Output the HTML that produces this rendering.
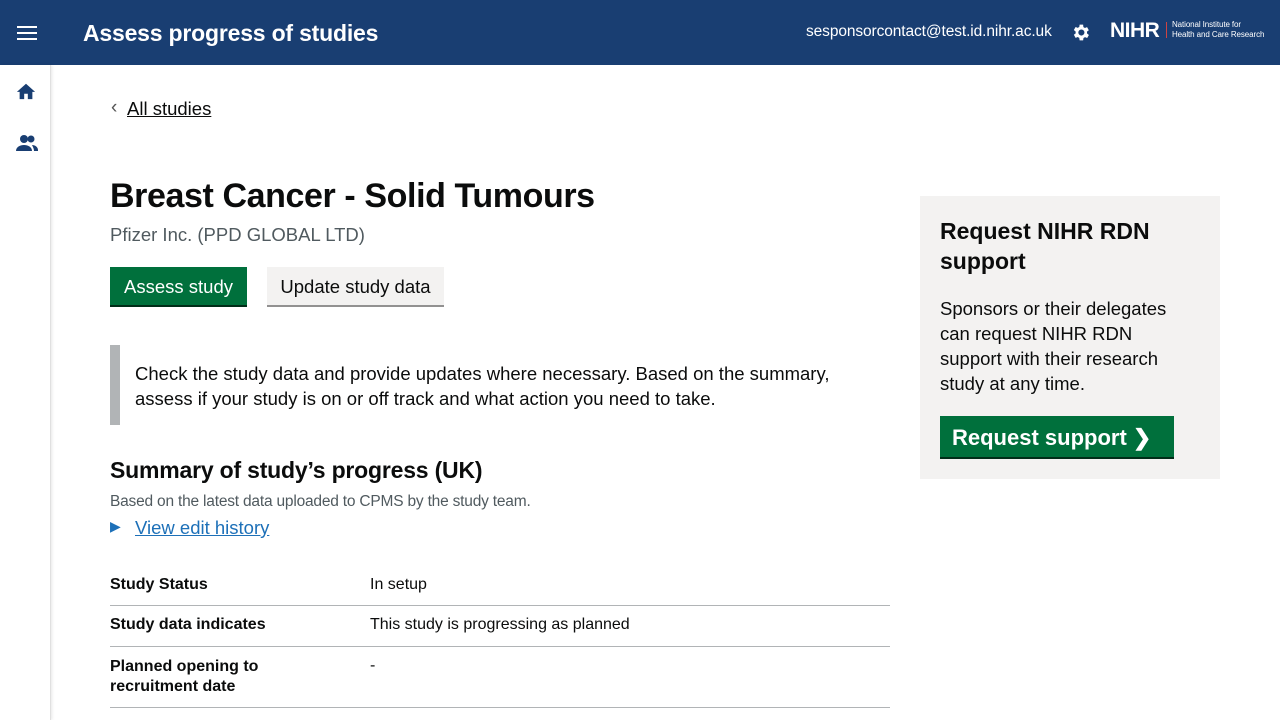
<!DOCTYPE html>
<html><head><style>
body{margin:0;width:1280px;height:720px;overflow:hidden;font-family:"Liberation Sans",sans-serif;background:#fff;color:#0b0c0c;position:relative}
.hdr{position:absolute;left:0;top:0;width:1280px;height:65px;background:#193e72}
.side{position:absolute;left:0;top:65px;width:50px;height:655px;background:#fff;border-right:1px solid #e0e0e0;box-shadow:1px 0 3px rgba(0,0,0,.1)}
.a{position:absolute;white-space:nowrap}
td{vertical-align:top;font-size:16px;padding:0}
</style></head><body>
<div class="hdr">
 <svg class="a" style="left:17px;top:26px" width="20" height="14"><rect y="0" width="20" height="2" fill="#fff"/><rect y="6" width="20" height="2" fill="#fff"/><rect y="12" width="20" height="2" fill="#fff"/></svg>
 <div class="a" style="left:83px;top:20px;color:#fff;font-size:23px;font-weight:bold;letter-spacing:-0.2px">Assess progress of studies</div>
 <div class="a" style="left:806px;top:23px;color:#fff;font-size:15.5px;letter-spacing:-0.1px">sesponsorcontact@test.id.nihr.ac.uk</div>
 <svg class="a" style="left:1070px;top:22px" width="21" height="21" viewBox="0 0 24 24"><path fill="#fff" d="M19.4 13a7.5 7.5 0 0 0 0-2l2.1-1.6-2-3.5-2.5 1a7 7 0 0 0-1.7-1L15 3h-4l-.4 2.7a7 7 0 0 0-1.7 1l-2.5-1-2 3.5L6.5 11a7.5 7.5 0 0 0 0 2l-2.1 1.6 2 3.5 2.5-1a7 7 0 0 0 1.7 1L11 21h4l.4-2.7a7 7 0 0 0 1.7-1l2.5 1 2-3.5zM13 15.5A3.5 3.5 0 1 1 13 8.5a3.5 3.5 0 0 1 0 7z"/></svg>
 <div class="a" style="left:1110px;top:19px;color:#fff;font-size:21px;font-weight:bold;letter-spacing:-0.5px">NIHR</div>
 <div class="a" style="left:1166px;top:22px;width:1px;height:16px;background:#c44"></div>
 <div class="a" style="left:1172px;top:20px;color:#fff;font-size:8px;line-height:10px;letter-spacing:-0.1px">National Institute for<br>Health and Care Research</div>
</div>
<div class="side">
 <svg class="a" style="left:15px;top:16px" width="22" height="20" viewBox="0 0 24 22"><path fill="#193e72" d="M10 20v-6h4v6h5v-8h3L12 3 2 12h3v8z"/></svg>
 <svg class="a" style="left:15px;top:68px" width="24" height="20" viewBox="0 0 24 20"><circle cx="9" cy="6" r="4" fill="#193e72"/><circle cx="16" cy="6" r="3.5" fill="#193e72"/><path fill="#193e72" d="M1 18c0-4 4-6 8-6s8 2 8 6zM17 12c3 0 6 2 6 5v1h-4c0-2-1-4-2-6z"/></svg>
</div>
<div class="a" style="left:111px;top:97px;font-size:19px;color:#555">&#8249;</div>
<div class="a" style="left:127px;top:98px;font-size:18.5px;text-decoration:underline">All studies</div>
<div class="a" style="left:110px;top:177px;font-size:34px;font-weight:bold;letter-spacing:-0.4px">Breast Cancer - Solid Tumours</div>
<div class="a" style="left:110px;top:224px;font-size:18.5px;color:#505a5f">Pfizer Inc. (PPD GLOBAL LTD)</div>
<div class="a" style="left:110px;top:267px;width:137px;height:38px;background:#00703c;border-bottom:2px solid #002d18;color:#fff;font-size:18.5px;line-height:40px;text-align:center">Assess study</div>
<div class="a" style="left:267px;top:267px;width:177px;height:38px;background:#f3f2f1;border-bottom:2px solid #929191;font-size:18.5px;line-height:40px;text-align:center">Update study data</div>
<div class="a" style="left:110px;top:345px;width:10px;height:80px;background:#b1b4b6"></div>
<div class="a" style="left:135px;top:361px;font-size:18.5px;line-height:25px;white-space:normal;width:740px">Check the study data and provide updates where necessary. Based on the summary, assess if your study is on or off track and what action you need to take.</div>
<div class="a" style="left:110px;top:457px;font-size:23px;font-weight:bold;letter-spacing:-0.2px">Summary of study’s progress (UK)</div>
<div class="a" style="left:110px;top:493px;font-size:15.5px;color:#505a5f;letter-spacing:-0.2px">Based on the latest data uploaded to CPMS by the study team.</div>
<div class="a" style="left:110px;top:518px;font-size:14px;color:#1d70b8">&#9654;</div>
<div class="a" style="left:135px;top:517px;font-size:18.5px;color:#1d70b8;text-decoration:underline">View edit history</div>
<table class="a" style="left:110px;top:576px;width:780px;border-collapse:collapse">
<tr style="border-bottom:1px solid #b1b4b6;height:29px"><td style="width:260px;font-weight:bold">Study Status</td><td>In setup</td></tr>
<tr style="border-bottom:1px solid #b1b4b6;height:41px"><td style="font-weight:bold;padding-top:10px">Study data indicates</td><td style="padding-top:10px">This study is progressing as planned</td></tr>
<tr style="border-bottom:1px solid #b1b4b6;height:61px"><td style="font-weight:bold;padding-top:10px;line-height:20px">Planned opening to<br>recruitment date</td><td style="padding-top:10px">-</td></tr>
</table>
<div class="a" style="left:920px;top:196px;width:300px;height:283px;background:#f3f2f1"></div>
<div class="a" style="left:940px;top:216px;font-size:23px;font-weight:bold;line-height:30px;white-space:normal;width:260px">Request NIHR RDN support</div>
<div class="a" style="left:940px;top:296px;font-size:18.5px;line-height:25px">Sponsors or their delegates<br>can request NIHR RDN<br>support with their research<br>study at any time.</div>
<div class="a" style="left:940px;top:416px;width:234px;height:43px;background:#00703c;border-bottom:2px solid #002d18;color:#fff;font-size:22px;font-weight:bold;line-height:44px;padding-left:12px;box-sizing:border-box">Request support &#10095;</div>
</body></html>
